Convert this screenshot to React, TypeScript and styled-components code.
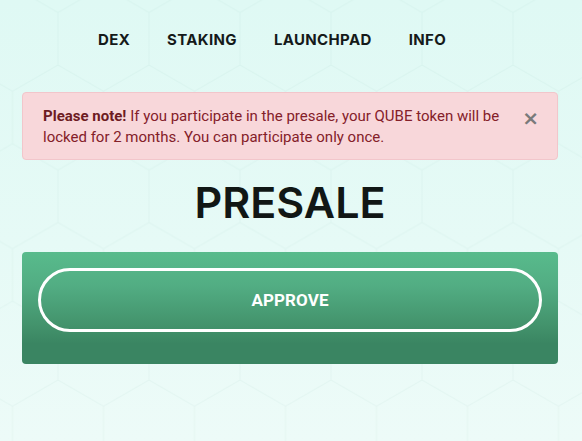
import React from "react";
import styled, { createGlobalStyle } from "styled-components";

const GlobalStyle = createGlobalStyle`
  html, body { margin: 0; padding: 0; }
  body {
    background: linear-gradient(180deg, #dff9f4 0%, #e6faf6 55%, #edfbf8 100%);
    min-height: 100vh;
    font-family: Roboto, "Liberation Sans", sans-serif;
  }
`;

const Page = styled.div`
  position: relative;
  min-height: 441px;
  overflow: hidden;
`;

const Pattern = styled.svg`
  position: absolute;
  inset: 0;
  width: 100%;
  height: 100%;
  z-index: 0;
  pointer-events: none;
`;

const Content = styled.div`
  position: relative;
  z-index: 1;
  display: flex;
  flex-direction: column;
  padding: 0 24px 0 22px;
`;

const Nav = styled.nav`
  display: flex;
  align-items: center;
  gap: 37px;
  height: 78px;
  padding-left: 76px;
  padding-bottom: 1px;
`;

const NavLink = styled.a`
  font-family: Inter, "Liberation Sans", sans-serif;
  font-weight: 700;
  font-size: 15px;
  letter-spacing: 0.35px;
  color: #151a1a;
  text-decoration: none;
`;

const Alert = styled.div`
  position: relative;
  margin-top: 13px;
  background: #f8d7da;
  border: 1px solid #f2c6cb;
  border-radius: 4px;
  padding: 13px 50px 11px 20px;
  color: #842029;
  font-size: 15px;
  line-height: 21px;
`;

const Strong = styled.strong`
  font-weight: 700;
  color: #6d1b22;
`;

const Close = styled.button`
  position: absolute;
  top: 15px;
  right: 18px;
  border: 0;
  background: none;
  padding: 0;
  font-family: "DejaVu Sans", sans-serif;
  font-size: 20px;
  font-weight: 700;
  line-height: 1;
  color: #7a7a7a;
  cursor: pointer;
`;

const Title = styled.h1`
  margin: 14px 0 0;
  text-align: center;
  font-family: Inter, "Liberation Sans", sans-serif;
  font-weight: 600;
  font-size: 43px;
  line-height: 56px;
  color: #111715;
`;

const Card = styled.div`
  margin-top: 22px;
  background: linear-gradient(180deg, #58bb8c 0%, #52ad83 30%, #43936c 65%, #3a8562 82%, #3a8562 100%);
  border-radius: 4px;
  padding: 16px 16px 32px;
`;

const PillButton = styled.button`
  display: block;
  width: 100%;
  height: 64px;
  border: 3px solid #ffffff;
  border-radius: 32px;
  background: transparent;
  color: #ffffff;
  font-family: Roboto, "Liberation Sans", sans-serif;
  font-weight: 700;
  font-size: 17px;
  letter-spacing: 0.1px;
  cursor: pointer;
`;

export default function App() {
  return (
    <>
      <GlobalStyle />
      <Page>
        <Pattern aria-hidden="true">
          <defs>
            <pattern
              id="hex"
              width="91"
              height="157.5"
              patternUnits="userSpaceOnUse"
              patternTransform="translate(12.5 65)"
            >
              <path
                d="M45.5 0 L91 26.25 L91 78.75 L45.5 105 L0 78.75 L0 26.25 Z M45.5 105 L45.5 157.5"
                fill="none"
                stroke="rgba(60,140,110,0.05)"
                strokeWidth="1"
              />
            </pattern>
          </defs>
          <rect width="100%" height="100%" fill="url(#hex)" />
        </Pattern>
        <Content>
          <Nav>
            <NavLink href="#">DEX</NavLink>
            <NavLink href="#">STAKING</NavLink>
            <NavLink href="#">LAUNCHPAD</NavLink>
            <NavLink href="#">INFO</NavLink>
          </Nav>
          <Alert>
            <Strong>Please note!</Strong> If you participate in the presale, your QUBE token will be
            locked for 2 months. You can participate only once.
            <Close aria-label="Close">×</Close>
          </Alert>
          <Title>PRESALE</Title>
          <Card>
            <PillButton>APPROVE</PillButton>
          </Card>
        </Content>
      </Page>
    </>
  );
}
